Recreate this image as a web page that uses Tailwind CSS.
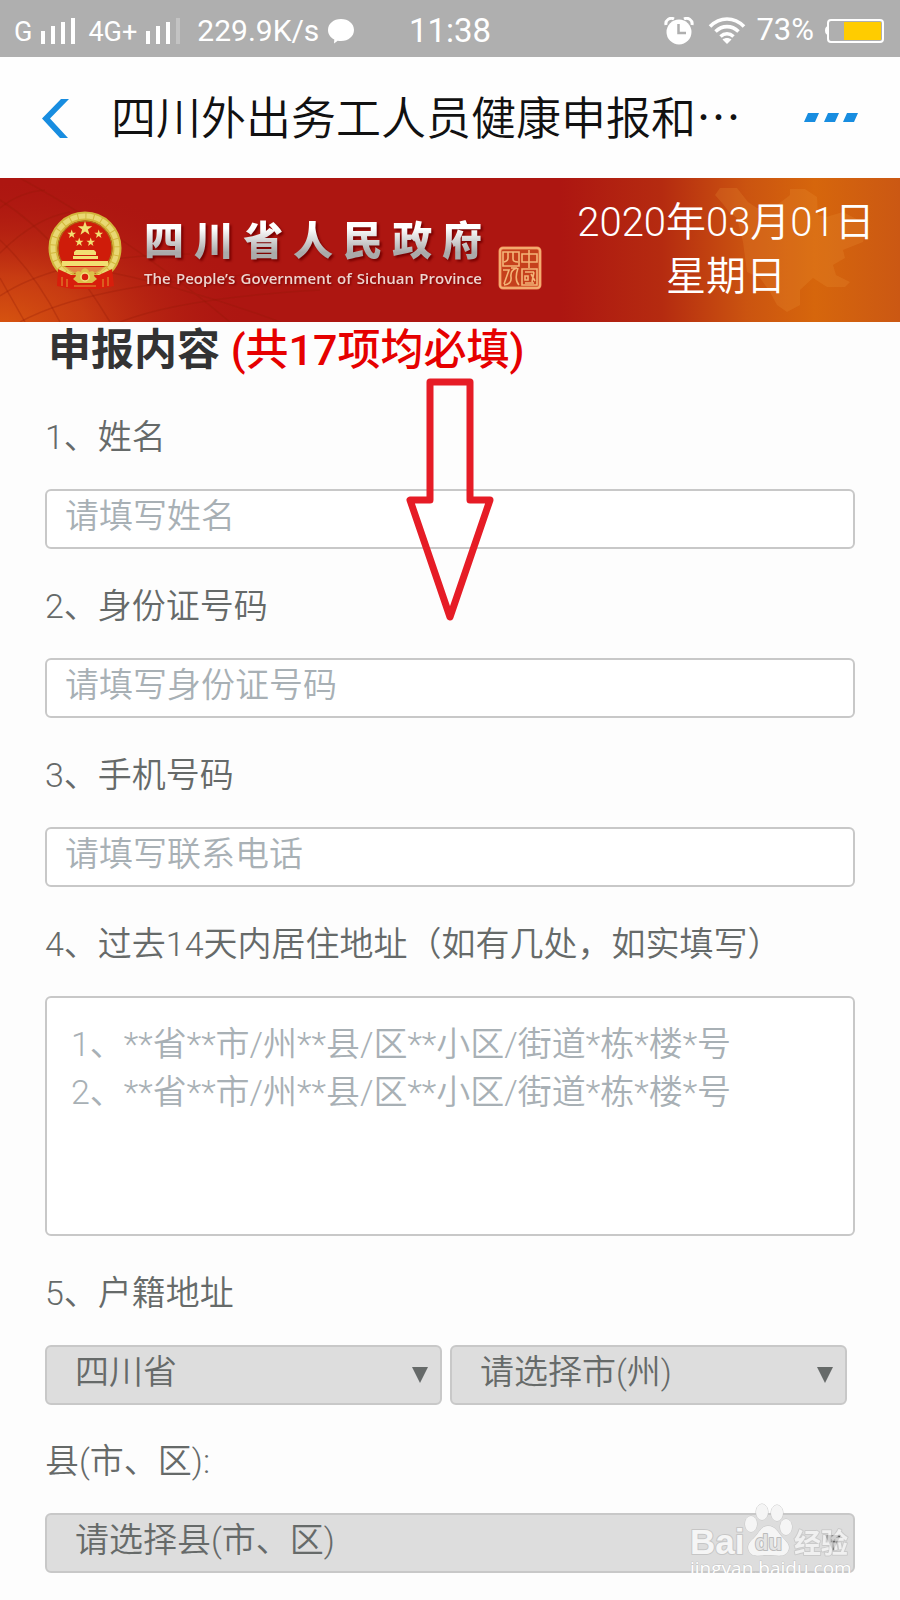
<!DOCTYPE html>
<html lang="zh-CN">
<head>
  <meta charset="UTF-8" />
  <meta name="viewport" content="width=device-width, initial-scale=1" />
  <title>四川外出务工人员健康申报</title>
  <script src="https://cdn.jsdelivr.net/npm/@tailwindcss/browser@4"></script>
</head>
<body class="bg-[#fdfdfd] font-['Noto_Sans_CJK_SC',sans-serif] font-[350] text-[#666a69]">
  <!-- Status bar -->
  <div class="grid h-[57px] grid-cols-[1fr_auto_1fr] items-center bg-[#afafaf] px-3.5 pt-1 font-[Roboto,sans-serif] font-normal text-white">
    <div class="flex items-center gap-2">
      <span class="pt-1 text-[27px]">G</span>
      <svg class="h-[26px] w-[36px]" viewBox="0 0 36 26" fill="#fff" aria-hidden="true">
        <path d="M1 13h4v13H1zM11 8h4v18h-4zM21 4h4v22h-4zM31 0h4v26h-4z" />
      </svg>
      <span class="pt-1 pl-1 text-[27px]">4G+</span>
      <svg class="h-[26px] w-[36px]" viewBox="0 0 36 26" fill="#fff" aria-hidden="true">
        <path d="M1 13h4v13H1zM11 8h4v18h-4zM21 4h4v22h-4z" />
        <path d="M31 0h4v26h-4z" opacity=".25" />
      </svg>
      <span class="pl-2 text-[30px]">229.9K/s</span>
      <svg class="h-[26px] w-[28px]" viewBox="0 0 28 26" fill="#fff" aria-hidden="true">
        <path d="M14 1c7.500 0 13 4.700 13 11s-5.500 11-13 11c-1.200 0-2.300-.1-3.300-.3L7 25.500l.3-4C3.300 19.600 1 16.200 1 12 1 5.700 6.500 1 14 1z" />
      </svg>
    </div>
    <span class="text-[33px]">11:38</span>
    <div class="flex items-center justify-end gap-2.5">
      <svg class="mr-1 h-[28px] w-[30px]" viewBox="0 0 30 28" aria-hidden="true">
        <path d="M2 8C1 3 6 0 10 2M28 8c1-5-4-8-8-6" fill="none" stroke="#fff" stroke-width="3" />
        <circle cx="15" cy="15" r="12.500" fill="#fff" />
        <path d="M14.500 7v9H22" fill="none" stroke="#afafaf" stroke-width="2.500" />
      </svg>
      <svg class="h-[27px] w-[38px]" viewBox="0 0 38 27" fill="none" stroke="#fff" stroke-width="3.600" aria-hidden="true">
        <path d="M2 9.500C12-.5 26-.5 36 9.500M7.500 14.500c7-6.500 16-6.500 23 0M12.500 19.500c4-3.600 9-3.600 13 0" />
        <path d="M19 27l-4.500-4.500c2.500-2 6.500-2 9 0z" fill="#fff" stroke="none" />
      </svg>
      <span class="text-[31px]">73%</span>
      <svg class="h-[26px] w-[62px]" viewBox="0 0 62 26" aria-hidden="true">
        <path d="M4 8c-4 0-4 9 0 9z" fill="#fff" />
        <rect x="4" y="2" width="55" height="22" rx="3" fill="none" stroke="#fff" stroke-width="2" />
        <rect x="20" y="4" width="37" height="18" fill="#fc0" />
      </svg>
    </div>
  </div>

  <!-- Title bar -->
  <nav class="flex h-[121px] items-center bg-[#fefefe] pr-[42px] pl-[41px] text-[#111]">
    <button type="button" aria-label="返回" class="w-[70px]">
      <svg class="h-[40px] w-[28px]" viewBox="0 0 28 40" fill="#188de0"><path d="M20 1h8L9 20.500 27 40h-8L1 20.500z" /></svg>
    </button>
    <h1 class="flex-1 pb-1 text-[45px] leading-[60px] whitespace-nowrap">四川外出务工人员健康申报和…</h1>
    <button type="button" aria-label="更多">
      <svg class="h-[9px] w-[54px]" viewBox="0 0 54 9" fill="#188de0"><path d="M4 0h11l-4 9H0zM24 0h11l-4 9H20zM43 0h11l-4 9H39z" /></svg>
    </button>
  </nav>

  <!-- Government banner -->
  <header class="relative flex h-[144px] items-center justify-between overflow-hidden bg-[#ad1611]">
    <svg class="absolute inset-0 h-full w-full" viewBox="0 0 900 144" preserveAspectRatio="none" aria-hidden="true">
      <defs>
        <radialGradient id="glowLeft" gradientUnits="userSpaceOnUse" cx="0" cy="150" r="250" gradientTransform="matrix(1 0 0 .6 0 60)">
          <stop offset="0" stop-color="#d8560f" />
          <stop offset=".35" stop-color="#cc4212" stop-opacity=".85" />
          <stop offset="1" stop-color="#ad1611" stop-opacity="0" />
        </radialGradient>
        <linearGradient id="glowRight">
          <stop offset="0" stop-color="#ad1611" />
          <stop offset=".3" stop-color="#b52b10" />
          <stop offset=".55" stop-color="#cb5410" />
          <stop offset=".75" stop-color="#d6660c" />
          <stop offset="1" stop-color="#cb5813" />
        </linearGradient>
      </defs>
      <rect x="560" width="340" height="144" fill="url(#glowRight)" />
      <rect width="330" height="144" fill="url(#glowLeft)" />
      <g fill="none" stroke="#8e1a08" stroke-opacity=".28" stroke-width="1.500">
        <path d="M0 22Q60 60 110 144M0 62Q35 95 60 144M20 0Q130 60 230 144M0 100L25 144M90 90Q190 110 280 144" />
        <path d="M0 30Q20 14 45 12M0 75Q35 40 70 34M0 118Q60 78 190 76M20 144Q90 106 260 96M120 144Q180 120 320 112" />
      </g>
      <path d="M715 17l5-7h17l11 14 9 6 20-3 13-10v-6h15l12 8 1 18 8 2 17-5 25 13-5 17-20 8 2 8-12 7 3 10 14 7-5 5-18 0-14-9-13 12v15l-13 7-10-7-7-13-10-14-13-6-4-30-6-24-8-6-6-8z" fill="#f19a3c" fill-opacity=".2" />
    </svg>

    <div class="relative flex items-center pl-12">
      <!-- National emblem -->
      <svg class="h-[80px] w-[76px] shrink-0" viewBox="0 0 76 80" role="img" aria-label="国徽">
        <circle cx="37" cy="38" r="32" fill="#cf1c0a" stroke="#d3b63c" stroke-width="9" />
        <circle cx="37" cy="38" r="32" fill="none" stroke="#e9d873" stroke-width="5" stroke-dasharray="7 1" />
        <circle cx="37" cy="38" r="27" fill="none" stroke="#a8801c" stroke-width="1" />
        <path d="M10 59l13 6h28l13-6 2 17-15 3H24L9 76z" fill="#d81e0c" />
        <g fill="#f2df72">
          <path id="star" d="M37 11l1.800 5.200h5.400l-4.300 3.300 1.600 5.300-4.500-3.200-4.500 3.200 1.600-5.300-4.300-3.300h5.400z" />
          <use href="#star" transform="matrix(.6 0 0 .6 1.500 13)" />
          <use href="#star" transform="matrix(.6 0 0 .6 28.500 13)" />
          <use href="#star" transform="matrix(.6 0 0 .6 9 21)" />
          <use href="#star" transform="matrix(.6 0 0 .6 20.500 21)" />
          <path d="M26 42l2-2h18l2 2v3H26zM25 46h25v3H25zM14 51h46v5H14z" />
          <path d="M15 57h44l-6 6H21z" opacity=".55" />
        </g>
        <path d="M28 66c-2-4 2-6 5-4 1-5 7-5 8 0 4-2 7 0 5 4l3 3-5 4H30l-5-4z" fill="#ddc04a" />
        <circle cx="37" cy="67" r="4" fill="#d81e0c" stroke="#f3e07a" stroke-width="1.500" />
        <path d="M14 67v9M19 69v8M55 69v8M60 67v9M26 76h22" fill="none" stroke="#df9b32" />
      </svg>
      <div class="ml-5 w-[338px] pt-2">
        <p class="bg-linear-to-b from-white from-30% to-[#aaa] to-80% bg-clip-text text-[40px] leading-[48px] font-black text-transparent drop-shadow-[2px_2px_1px_#700] [text-align-last:justify]">四川省人民政府</p>
        <p class="font-['Open_Sans',sans-serif] text-[15px] leading-8 font-semibold whitespace-nowrap text-[#eed5cf] drop-shadow-[1px_1px_1px_#700] [text-align-last:justify]">The People’s Government of Sichuan Province</p>
      </div>
      <!-- Seal -->
      <svg class="mt-9 ml-4 h-[44px] w-[44px] shrink-0" viewBox="0 0 44 44" fill="none" stroke="#f4b477" stroke-width="1.600" role="img" aria-label="中国四川">
        <rect x="2" y="2" width="40" height="40" rx="3" fill="#c5401c" stroke="#ef8857" stroke-width="3" />
        <rect x="2" y="2" width="40" height="40" rx="3" />
        <path d="M5 6h16v14H5zM10 6v6q0 3-4 4M15 6v7q0 3 5 3M5 24h6l-5 14M13 22h6q-7 2-6 9 1 7-7 8M20 22q-4 12 1 17" />
        <path d="M24 8h15v8H24zM31 4v18M24 23h15v16H24zM27 26h9M27 30h3v4h-3zM33 28l4 7M36 26l-2 10M27 37h9" />
      </svg>
    </div>
    <time datetime="2020-03-01" class="relative w-[348px] text-center font-[Roboto,'Noto_Sans_CJK_SC',sans-serif] text-[40px] leading-[54px] text-white">2020年03月01日<br />星期日</time>
  </header>

  <main class="relative px-[45px] font-[Roboto,'Noto_Sans_CJK_SC',sans-serif]">
    <h2 class="pl-[3px] text-[43px] leading-[56px] font-bold text-[#333]">申报内容 <span class="font-medium text-[#e60000]">(共17项均必填)</span></h2>

    <form class="mt-[31px] flex flex-col gap-[29px] text-[34px] leading-[48px]">
      <div class="flex flex-col gap-7">
        <label for="name" class="pt-1">1、姓名</label>
        <input id="name" type="text" placeholder="请填写姓名" class="h-[60px] w-full rounded-md border-[2px] border-[#c8c8c8] bg-white px-[18px] pb-1.5 placeholder:text-[#a8b0b5]" />
      </div>
      <div class="flex flex-col gap-7">
        <label for="idcard" class="pt-1">2、身份证号码</label>
        <input id="idcard" type="text" placeholder="请填写身份证号码" class="h-[60px] w-full rounded-md border-[2px] border-[#c8c8c8] bg-white px-[18px] pb-1.5 placeholder:text-[#a8b0b5]" />
      </div>
      <div class="flex flex-col gap-7">
        <label for="phone" class="pt-1">3、手机号码</label>
        <input id="phone" type="tel" placeholder="请填写联系电话" class="h-[60px] w-full rounded-md border-[2px] border-[#c8c8c8] bg-white px-[18px] pb-1.5 placeholder:text-[#a8b0b5]" />
      </div>
      <div class="flex flex-col gap-7">
        <label for="stay" class="pt-1">4、过去14天内居住地址（如有几处，如实填写）</label>
        <textarea id="stay" placeholder="1、**省**市/州**县/区**小区/街道*栋*楼*号&#10;2、**省**市/州**县/区**小区/街道*栋*楼*号" class="h-[240px] w-full resize-none rounded-md border-[2px] border-[#c8c8c8] bg-white px-6 py-[22px] placeholder:text-[#a8b0b5]"></textarea>
      </div>

      <div class="flex flex-col gap-7">
        <div class="flex flex-col gap-7">
          <label for="province" class="pt-1">5、户籍地址</label>
          <div class="flex gap-2">
            <div class="relative w-[49%]">
              <select id="province" class="block h-[60px] w-full appearance-none rounded-md border-[2px] border-[#c8c8c8] bg-[#ddd] pr-12 pb-1.5 pl-7">
                <option>四川省</option>
              </select>
              <svg class="pointer-events-none absolute top-[22px] right-[14px] h-[16px] w-[16px]" viewBox="0 0 16 16" fill="#666a69" aria-hidden="true"><path d="M0 0h16L8 16z" /></svg>
            </div>
            <div class="relative w-[49%]">
              <select id="city" aria-label="市(州)" class="block h-[60px] w-full appearance-none rounded-md border-[2px] border-[#c8c8c8] bg-[#ddd] pr-12 pb-1.5 pl-7">
                <option>请选择市(州)</option>
              </select>
              <svg class="pointer-events-none absolute top-[22px] right-[14px] h-[16px] w-[16px]" viewBox="0 0 16 16" fill="#666a69" aria-hidden="true"><path d="M0 0h16L8 16z" /></svg>
            </div>
          </div>
        </div>
        <div class="flex flex-col gap-7">
          <label for="county" class="pt-1">县(市、区):</label>
          <div class="relative">
            <select id="county" class="block h-[60px] w-full appearance-none rounded-md border-[2px] border-[#c8c8c8] bg-[#ddd] pr-12 pb-1.5 pl-7">
              <option>请选择县(市、区)</option>
            </select>
            <svg class="pointer-events-none absolute top-[22px] right-[14px] h-[16px] w-[16px]" viewBox="0 0 16 16" fill="#444" aria-hidden="true"><path d="M0 0h16L8 16z" /></svg>

            <!-- Watermark -->
            <svg class="pointer-events-none absolute -top-[13px] right-0 h-[84px] w-[170px]" viewBox="0 0 170 84" fill="#f5f5f5" stroke="#c6c6c6" stroke-width="2" stroke-linejoin="round" paint-order="stroke">
              <text x="5" y="54" font-family="Liberation Sans" font-size="35" font-weight="bold">Bai</text>
              <ellipse cx="66" cy="24" rx="6" ry="8" stroke-width="1" />
              <ellipse cx="77" cy="12" rx="6" ry="8" stroke-width="1" />
              <ellipse cx="92" cy="13" rx="6" ry="8" stroke-width="1" />
              <ellipse cx="101" cy="27" rx="6" ry="8" stroke-width="1" />
              <path d="M83 26c8 0 10 7 15 12 6 6 7 9 5 13-3 7-12 4-20 4s-16 3-19-4c-2-4-1-8 5-13 5-5 7-12 14-12z" stroke-width="1" />
              <text x="70" y="50" font-family="Liberation Sans" font-size="22" font-weight="bold" fill="#e4e4e4" stroke="#bbb">du</text>
              <text x="109" y="53" font-family="Noto Sans CJK SC" font-size="27" font-weight="bold" opacity=".8">经验</text>
              <text x="5" y="75" font-family="Open Sans" font-size="19" font-weight="400" fill="#fff" stroke-width="1">jingyan.baidu.com</text>
            </svg>
          </div>
        </div>
      </div>
    </form>

    <!-- Arrow annotation over the form -->
    <svg class="pointer-events-none absolute top-[56px] left-1/2 h-[244px] w-[88px] -translate-x-1/2" viewBox="0 0 88 244" fill="none" stroke="#e61c26" stroke-width="7" stroke-linejoin="round" aria-hidden="true">
      <path d="M24 4h40v118h20L44 239 4 122h20z" />
    </svg>
  </main>
</body>
</html>
